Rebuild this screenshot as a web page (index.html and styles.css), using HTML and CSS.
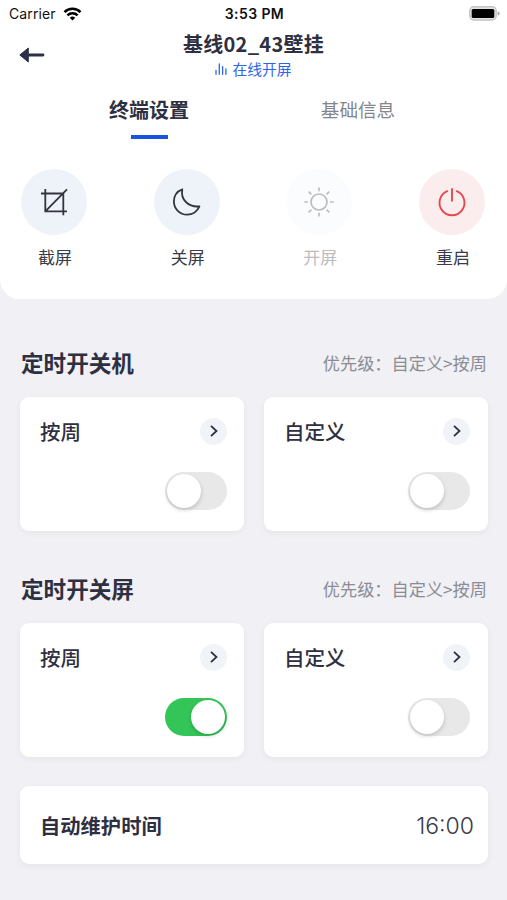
FILE: index.html
```html
<!DOCTYPE html>
<html lang="zh-CN">
<head>
  <meta charset="UTF-8" />
  <meta name="viewport" content="width=device-width, initial-scale=1.0"/>
  <title>终端设置</title>
  <link rel="stylesheet" href="styles.css">
</head>
<body>
  <header class="panel">
    <div class="status-bar">
      <div class="carrier">
        <span>Carrier</span>
        <svg width="19" height="14" viewBox="0 0 18 14" fill="none" stroke="#000" stroke-width="2.6">
          <path d="M1 5.1a11.4 11.4 0 0 1 16 0"/>
          <path d="M3.9 8.4a7.3 7.3 0 0 1 10.2 0"/>
          <path d="M9 13.6L6.3 10.8a3.9 3.9 0 0 1 5.4 0z" fill="#000" stroke="none"/>
        </svg>
      </div>
      <span class="clock">3:53 PM</span>
      <svg class="battery" width="31" height="15" viewBox="0 0 31 15">
        <rect x="0.8" y="0.8" width="26.4" height="13.2" rx="4" fill="#e4e4e4" stroke="#c4c4c4" stroke-width="1.4"/>
        <rect x="2.7" y="2.9" width="22.6" height="9.2" rx="1.5" fill="#000"/>
        <path d="M28.7 5.2q2 .7 2 2.3t-2 2.3z" fill="#a5a5a5"/>
      </svg>
    </div>

    <div class="title-bar">
      <button class="back" aria-label="返回">
        <svg width="26" height="16" viewBox="0 0 26 16">
          <path d="M9.5 8H24" stroke="#2e3048" stroke-width="2.8" stroke-linecap="round"/>
          <path d="M0.8 8L9.3 1v14z" fill="#2e3048" stroke="#2e3048" stroke-width="1" stroke-linejoin="round"/>
        </svg>
      </button>
      <div class="title">
        <h1>基线02_43壁挂</h1>
        <p class="state">
          <svg width="12" height="12" viewBox="0 0 12 12" stroke="#2c66e3" stroke-width="1.3" stroke-linecap="round">
            <path d="M1 7.5v3.8M4.3 1v10.3M7.6 3.6v7.7M10.9 6v5.3"/>
          </svg>
          <span>在线开屏</span>
        </p>
      </div>
    </div>

    <nav class="tabs">
      <a class="tab active">终端设置</a>
      <a class="tab">基础信息</a>
    </nav>

    <div class="actions">
      <button class="action">
        <span class="round">
          <svg width="30" height="30" viewBox="0 0 30 30" fill="none" stroke="#33343f" stroke-width="1.8">
            <path d="M2 6.5h22.3v21.7M6.300 2v22.300H28M6.300 24.300L28 2.300"/>
          </svg>
        </span>
        <span>截屏</span>
      </button>
      <button class="action">
        <span class="round">
          <svg width="30" height="30" viewBox="0 0 30 30" fill="none" stroke="#33343f" stroke-width="1.8" stroke-linejoin="round">
            <path d="M10.300 2.300C5.200 4.200 1.900 9 1.900 14.500a13.200 13.200 0 0 0 13.200 13.200c5.400 0 10.300-3.300 12.300-8.300C17 20.500 8.200 13 10.300 2.300z"/>
          </svg>
        </span>
        <span>关屏</span>
      </button>
      <button class="action disabled">
        <span class="round">
          <svg width="30" height="30" viewBox="0 0 30 30" fill="none" stroke="#bcbdc1" stroke-width="1.7">
            <circle cx="15" cy="15" r="8"/>
            <path d="M15 .5v3.700M15 25.800v3.700M.3 15H4M26 15h3.700M4.700 4.700l2.700 2.700M22.600 22.600l2.700 2.700M25.300 4.700l-2.700 2.700M7.400 22.600l-2.700 2.700"/>
          </svg>
        </span>
        <span>开屏</span>
      </button>
      <button class="action danger">
        <span class="round">
          <svg width="30" height="30" viewBox="0 0 30 30" fill="none" stroke="#e8474b" stroke-width="1.9" stroke-linecap="round">
            <path d="M15 2v11.800M10.300 4.200a12.500 12.500 0 1 0 9.400 0"/>
          </svg>
        </span>
        <span>重启</span>
      </button>
    </div>
  </header>

  <main>
    <section>
      <div class="section-head">
        <h2>定时开关机</h2>
        <span class="hint">优先级：自定义&gt;按周</span>
      </div>
      <div class="cards">
        <div class="card">
          <div class="card-row">
            <span>按周</span>
            <span class="more"><svg width="10" height="14" viewBox="0 0 10 14"><path d="M2 1.800L7.500 7 2 12.200"/></svg></span>
          </div>
          <div class="switch"></div>
        </div>
        <div class="card">
          <div class="card-row">
            <span>自定义</span>
            <span class="more"><svg width="10" height="14" viewBox="0 0 10 14"><path d="M2 1.800L7.500 7 2 12.200"/></svg></span>
          </div>
          <div class="switch"></div>
        </div>
      </div>
    </section>

    <section>
      <div class="section-head">
        <h2>定时开关屏</h2>
        <span class="hint">优先级：自定义&gt;按周</span>
      </div>
      <div class="cards">
        <div class="card">
          <div class="card-row">
            <span>按周</span>
            <span class="more"><svg width="10" height="14" viewBox="0 0 10 14"><path d="M2 1.800L7.500 7 2 12.200"/></svg></span>
          </div>
          <div class="switch on"></div>
        </div>
        <div class="card">
          <div class="card-row">
            <span>自定义</span>
            <span class="more"><svg width="10" height="14" viewBox="0 0 10 14"><path d="M2 1.800L7.500 7 2 12.200"/></svg></span>
          </div>
          <div class="switch"></div>
        </div>
      </div>
    </section>

    <div class="maintain">
      <span>自动维护时间</span>
      <span class="time">16:00</span>
    </div>
  </main>

  <script>
    document.querySelectorAll('.switch').forEach(function(el) {
      el.addEventListener('click', function() {
        el.classList.toggle('on');
      });
    });
  </script>
</body>
</html>
```
FILE: styles.css
```css
* {
  box-sizing: border-box;
}

body {
  margin: 0;
  min-height: 900px;
  background: #f0f0f5;
  color: #2e3041;
  font-family: 'Noto Sans CJK SC', sans-serif;
}

h1, h2, p {
  margin: 0;
}

svg {
  display: block;
}

button {
  padding: 0;
  border: none;
  background: none;
  color: inherit;
  font-family: inherit;
  cursor: pointer;
}

.panel {
  height: 299px;
  background: #fff;
  border-radius: 0 0 20px 20px;
}

/* status bar */
.status-bar {
  display: grid;
  grid-template-columns: 1fr auto 1fr;
  align-items: center;
  height: 27px;
  padding: 0 7px 0 9px;
  color: #111;
  font-family: Inter, sans-serif;
  font-size: 14px;
}

.carrier {
  display: flex;
  align-items: center;
  gap: 7px;
  letter-spacing: 0.1px;
}

.clock {
  font-weight: 600;
  letter-spacing: 0.4px;
}

.battery {
  justify-self: end;
}

/* title */
.title-bar {
  display: grid;
  grid-template-columns: 60px 1fr 60px;
  height: 56px;
}

.back {
  display: flex;
  align-items: center;
  padding-left: 19px;
}

.title {
  text-align: center;
  padding-top: 4px;
}

.title h1 {
  font-size: 20px;
  line-height: 26px;
  font-weight: 700;
  letter-spacing: 0.3px;
}

.state {
  display: flex;
  justify-content: center;
  align-items: center;
  gap: 5px;
  color: #2c66e3;
  font-size: 14.8px;
  line-height: 24px;
}

/* tabs */
.tabs {
  display: grid;
  grid-template-columns: 209px 209px;
  justify-content: center;
  height: 56px;
}

.tab {
  display: flex;
  flex-direction: column;
  align-items: center;
  padding-top: 11px;
  color: #85868c;
  font-size: 18.6px;
  line-height: 30px;
}

.tab.active {
  padding-top: 12px;
  color: #2e3041;
  font-size: 20px;
  font-weight: 700;
}

.tab.active::after {
  content: "";
  width: 37px;
  height: 4px;
  margin-top: 10px;
  background: #1755e0;
}

/* quick actions */
.actions {
  display: flex;
  justify-content: space-between;
  padding: 30px 22px 0 21px;
}

.action {
  display: flex;
  flex-direction: column;
  align-items: center;
  gap: 9px;
  width: 66px;
  color: #3a3b48;
  font-size: 17px;
  line-height: 26px;
}

.action > span:last-child {
  padding-left: 2px;
}

.round {
  display: flex;
  align-items: center;
  justify-content: center;
  width: 66px;
  height: 66px;
  border-radius: 50%;
  background: #eef2f9;
}

.action.disabled {
  color: #bcbdc1;
}

.disabled .round {
  background: #fafcfe;
}

.danger .round {
  background: #fbeded;
}

/* schedules */
main {
  padding: 44px 19px 0 20px;
}

.section-head {
  display: flex;
  justify-content: space-between;
  align-items: center;
  height: 38px;
  padding: 0 1px;
}

.section-head h2 {
  font-size: 22.6px;
  font-weight: 700;
}

.hint {
  color: #8b8c93;
  font-size: 17.2px;
}

.cards {
  display: grid;
  grid-template-columns: 1fr 1fr;
  gap: 20px;
  margin: 16px 0 38px;
}

.card {
  height: 134px;
  padding: 20px 17px 0 20px;
  border-radius: 9px;
  background: #fff;
  box-shadow: 0 2px 7px rgba(0, 0, 0, 0.05);
}

.card:last-child {
  padding-right: 18px;
}

.card-row {
  display: flex;
  justify-content: space-between;
  align-items: center;
  height: 28px;
  font-size: 20.5px;
  font-weight: 500;
  line-height: 28px;
}

.more {
  display: flex;
  align-items: center;
  justify-content: center;
  width: 27px;
  height: 27px;
  border-radius: 50%;
  background: #f0f4f9;
}

.more path {
  fill: none;
  stroke: #2e3041;
  stroke-width: 1.8;
}

.switch {
  display: flex;
  width: 62px;
  height: 38px;
  margin: 27px 0 0 auto;
  padding: 2px;
  border-radius: 19px;
  background: #e8e8e9;
  cursor: pointer;
}

.switch::before {
  content: "";
  width: 34px;
  height: 34px;
  border-radius: 50%;
  background: #fff;
  box-shadow: 0 2px 4px rgba(0, 0, 0, 0.18);
}

.switch.on {
  justify-content: flex-end;
  background: #34c558;
}

.maintain {
  display: flex;
  justify-content: space-between;
  align-items: center;
  height: 78px;
  margin-top: -9px;
  padding: 0 14px 0 20px;
  border-radius: 9px;
  background: #fff;
  box-shadow: 0 2px 7px rgba(0, 0, 0, 0.05);
  font-size: 20.3px;
  font-weight: 700;
}

.time {
  padding-top: 1px;
  color: #3a3b48;
  font-family: Inter, sans-serif;
  font-size: 23px;
  font-weight: 300;
}
```
